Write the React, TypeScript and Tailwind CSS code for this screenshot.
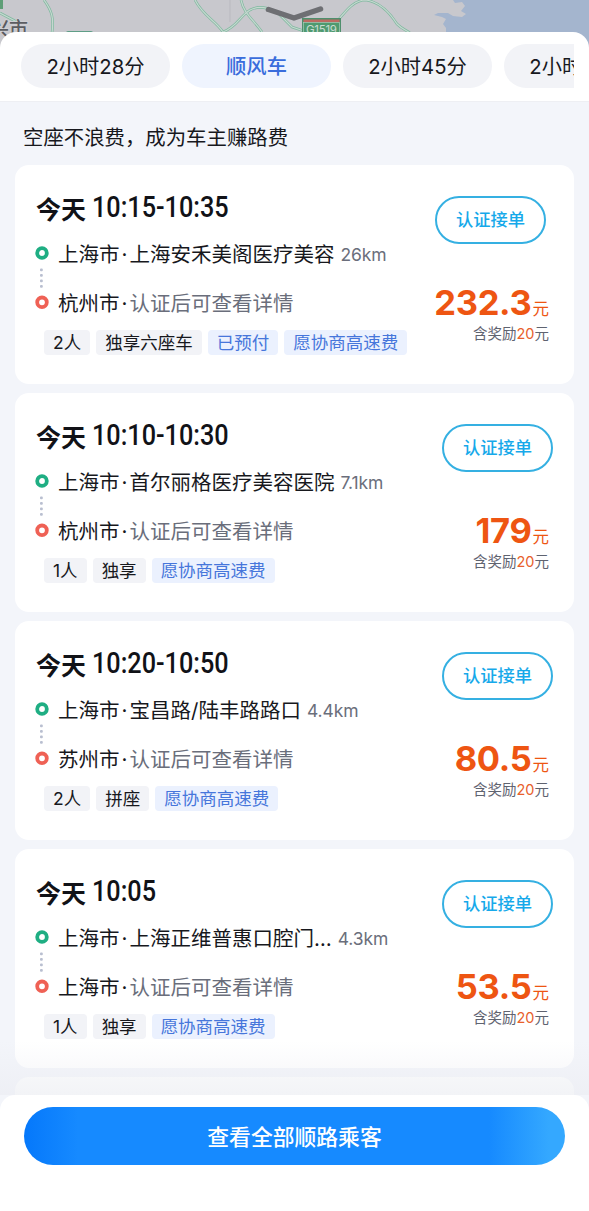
import clsx from "clsx";

const tabs = [
  { id: 1, label: "2小时28分" },
  { id: 2, label: "顺风车", active: true },
  { id: 3, label: "2小时45分" },
  { id: 4, label: "2小时50分" },
];

const orders = [
  {
    id: 1,
    time: "10:15-10:35",
    from: "上海安禾美阁医疗美容",
    distance: "26km",
    toCity: "杭州市",
    tags: ["2人", "独享六座车"],
    perks: ["已预付", "愿协商高速费"],
    price: "232.3",
    shifted: true,
  },
  {
    id: 2,
    time: "10:10-10:30",
    from: "首尔丽格医疗美容医院",
    distance: "7.1km",
    toCity: "杭州市",
    tags: ["1人", "独享"],
    perks: ["愿协商高速费"],
    price: "179",
  },
  {
    id: 3,
    time: "10:20-10:50",
    from: "宝昌路/陆丰路路口",
    distance: "4.4km",
    toCity: "苏州市",
    tags: ["2人", "拼座"],
    perks: ["愿协商高速费"],
    price: "80.5",
  },
  {
    id: 4,
    time: "10:05",
    from: "上海正维普惠口腔门…",
    distance: "4.3km",
    toCity: "上海市",
    tags: ["1人", "独享"],
    perks: ["愿协商高速费"],
    price: "53.5",
  },
];

type Order = (typeof orders)[number];

function MapStrip() {
  return (
    <svg className="block h-12 w-full shrink-0" viewBox="0 0 589 48">
      <rect width="589" height="48" fill="#c8c8cd" />
      <path
        d="M453 0l2 3 7-1 3 4-4 5 5 3-4 3-9-1-5-3-10 0-4 2 8 2 4 2-3 5 3 4 0 4 6 6v10H589V0Z"
        fill="#a4b5ce"
      />
      <g fill="none" stroke="#7fb99f" strokeWidth="2.6">
        <path d="M44 0c8 11 10 18 8 33M0 13l17 9" />
        <path d="M195 0c8 16 20 20 28 32M223 32c14-5 17-16 27-22 9-5 18-2 27 2l15 15 12 4" />
        <path d="M241 0c3 14 12 19 21 32" />
        <path d="M335 24c10-12 18-24 31-24 13 2 24 13 31 24 5 5 9 6 13 9" />
      </g>
      <g fill="none" stroke="#c6d8d0" strokeWidth="1.2">
        <path d="M44 0c8 11 10 18 8 33M0 13l17 9" />
        <path d="M195 0c8 16 20 20 28 32M223 32c14-5 17-16 27-22 9-5 18-2 27 2l15 15 12 4" />
        <path d="M241 0c3 14 12 19 21 32" />
        <path d="M335 24c10-12 18-24 31-24 13 2 24 13 31 24 5 5 9 6 13 9" />
      </g>
      <path d="M230 0v22" stroke="#b9b9bf" strokeWidth="1" />
      <rect x="0" y="0" width="3" height="9" fill="#5f9e77" />
      <rect x="66" y="31" width="27" height="6" rx="2" fill="#5f9e87" />
      <text
        x="-10"
        y="36"
        fontSize="19"
        fontWeight="500"
        fill="#5b5c61"
        stroke="#d2d2d6"
        strokeWidth="1.5"
        paintOrder="stroke"
      >
        兴市
      </text>
      <rect x="302" y="18" width="39" height="22" fill="#4f8f6d" />
      <rect x="303.500" y="19.500" width="36" height="3" fill="#bd6a62" />
      <rect x="303.500" y="22.500" width="36" height="16" fill="#4f9a70" stroke="#a8cdb9" strokeWidth="0.700" />
      <text x="306" y="33.500" fontSize="11.500" fill="#c9dcd1" textLength="31">
        G1519
      </text>
      <path
        d="M268.500 9.500L294 18l26.500-9"
        fill="none"
        stroke="#6e6f73"
        strokeWidth="5.500"
        strokeLinecap="round"
        strokeLinejoin="round"
      />
    </svg>
  );
}

function TabBar() {
  return (
    <div className="h-[69px] shrink-0 pt-3 pl-[21px] pr-[15px]">
      <div className="flex gap-3 overflow-hidden">
        {tabs.map((tab) => (
          <button
            key={tab.id}
            className={clsx(
              "h-11 w-[149px] shrink-0 rounded-full pt-px text-[20.3px] leading-[44px]",
              tab.active
                ? "bg-[#eff4fe] font-medium text-[#3a6ddc]"
                : "bg-[#f2f3f7] text-[#17181d]",
            )}
          >
            {tab.label}
          </button>
        ))}
      </div>
    </div>
  );
}

function RouteMarks() {
  return (
    <svg className="-ml-px h-[66px] w-[14px] shrink-0" viewBox="0 0 14 66">
      <circle cx="7" cy="8" r="4.800" fill="#fff" stroke="#1fae83" strokeWidth="3.800" />
      <g fill="#b9bfd0">
        <rect x="5" y="23.500" width="2.800" height="2.800" rx="1" />
        <rect x="5" y="29" width="2.800" height="2.800" rx="1" />
        <rect x="5" y="34.500" width="2.800" height="2.800" rx="1" />
        <rect x="5" y="40" width="2.800" height="2.800" rx="1" />
      </g>
      <circle cx="7" cy="57.300" r="4.800" fill="#fff" stroke="#ef6155" strokeWidth="3.800" />
    </svg>
  );
}

function OrderCard({ order }: { order: Order }) {
  return (
    <div className="flex h-[219px] shrink-0 justify-between rounded-[14px] bg-white pl-[21px] pr-[21px]">
      <div className="pt-[26px]">
        <div className="flex h-[34px] items-center whitespace-nowrap text-[#111217]">
          <span className="w-[56px] pt-[3px] text-[25px] leading-[34px] font-bold">今天</span>
          <span className="origin-left scale-x-[0.87] pb-[3px] font-['Roboto',sans-serif] text-[29px] leading-[32px] font-medium">
            {order.time}
          </span>
        </div>

        <div className="mt-5 flex">
          <RouteMarks />
          <div className="-mt-[5px] flex flex-col gap-[19px] pl-[9px] text-[20.5px] leading-[30px] whitespace-nowrap text-[#17181d]">
            <div className="flex items-center">
              <span>上海市</span>
              <span className="w-[10px] text-center">·</span>
              <span>{order.from}</span>
              <span className="-mt-px pl-1.5 text-[17.5px] tracking-[-0.1px] text-[#6a6e7b]">
                {order.distance}
              </span>
            </div>
            <div className="flex items-center">
              <span>{order.toCity}</span>
              <span className="w-[10px] text-center">·</span>
              <span className="text-[#6a6e7b]">认证后可查看详情</span>
            </div>
          </div>
        </div>

        <div className="ml-2 flex gap-1.5 pt-[11px] text-[17.5px] leading-[26px] whitespace-nowrap">
          {order.tags.map((tag) => (
            <span key={tag} className="h-[25px] rounded bg-[#f2f3f7] px-[9px] text-[#17181d]">
              {tag}
            </span>
          ))}
          {order.perks.map((perk) => (
            <span key={perk} className="h-[25px] rounded bg-[#ebf1fe] px-[9px] text-[#4676db]">
              {perk}
            </span>
          ))}
        </div>
      </div>

      <div className="flex flex-col items-end pt-[31px] whitespace-nowrap">
        <button
          className={clsx(
            "h-12 w-[111px] rounded-full border-2 border-[#35b0e2] text-[17.3px] leading-[44px] font-medium text-[#16a9ea]",
            order.shifted && "mr-[7px]",
          )}
        >
          认证接单
        </button>
        <div className="mt-[38px] mr-[4px] flex h-[42px] items-baseline text-[#ee5512]">
          <span className="text-[34.5px] leading-[42px] font-bold tracking-[-0.3px]">
            {order.price}
          </span>
          <span className="pl-px text-[16.5px]">元</span>
        </div>
        <div className="mr-[4px] text-[14.5px] leading-[20px] text-[#5f6370]">
          含奖励<span className="text-[#e8602c]">20</span>元
        </div>
      </div>
    </div>
  );
}

export default function App() {
  return (
    <div className="flex h-[1211px] w-[589px] flex-col overflow-hidden bg-[#f3f5fa] font-['Inter','Noto_Sans_CJK_SC',sans-serif]">
      <MapStrip />

      {/* Sheet */}
      <div className="relative -mt-4 flex flex-1 flex-col">
        <div className="rounded-t-[16px] bg-white">
          <TabBar />
        </div>

        {/* Order list */}
        <div className="relative flex h-[994px] shrink-0 flex-col gap-[9px] overflow-hidden border-t border-[#eeeff3] px-[15px]">
          <h2 className="-mb-[9px] h-[63px] shrink-0 pt-[21px] pl-2 text-[20.4px] leading-[30px] text-[#17181d]">
            空座不浪费，成为车主赚路费
          </h2>
          {orders.map((order) => (
            <OrderCard key={order.id} order={order} />
          ))}
          <div className="h-[40px] shrink-0 rounded-t-[14px] bg-[#fcfdfd]" />
          <div className="absolute inset-x-0 bottom-0 h-[54px] bg-linear-to-b from-[#e9eaf0]/0 to-[#e9eaf0]/50" />
        </div>

        {/* Bottom action */}
        <div className="relative h-[116px] shrink-0 rounded-t-[15px] bg-white px-6 pt-3">
          <button className="h-[58px] w-[541px] rounded-full bg-[linear-gradient(90deg,#0578fb_0%,#168aff_10%,#168aff_86%,#34a8ff_97%)] pt-px text-[21.8px] leading-[58px] font-medium text-white">
            查看全部顺路乘客
          </button>
        </div>
      </div>
    </div>
  );
}
